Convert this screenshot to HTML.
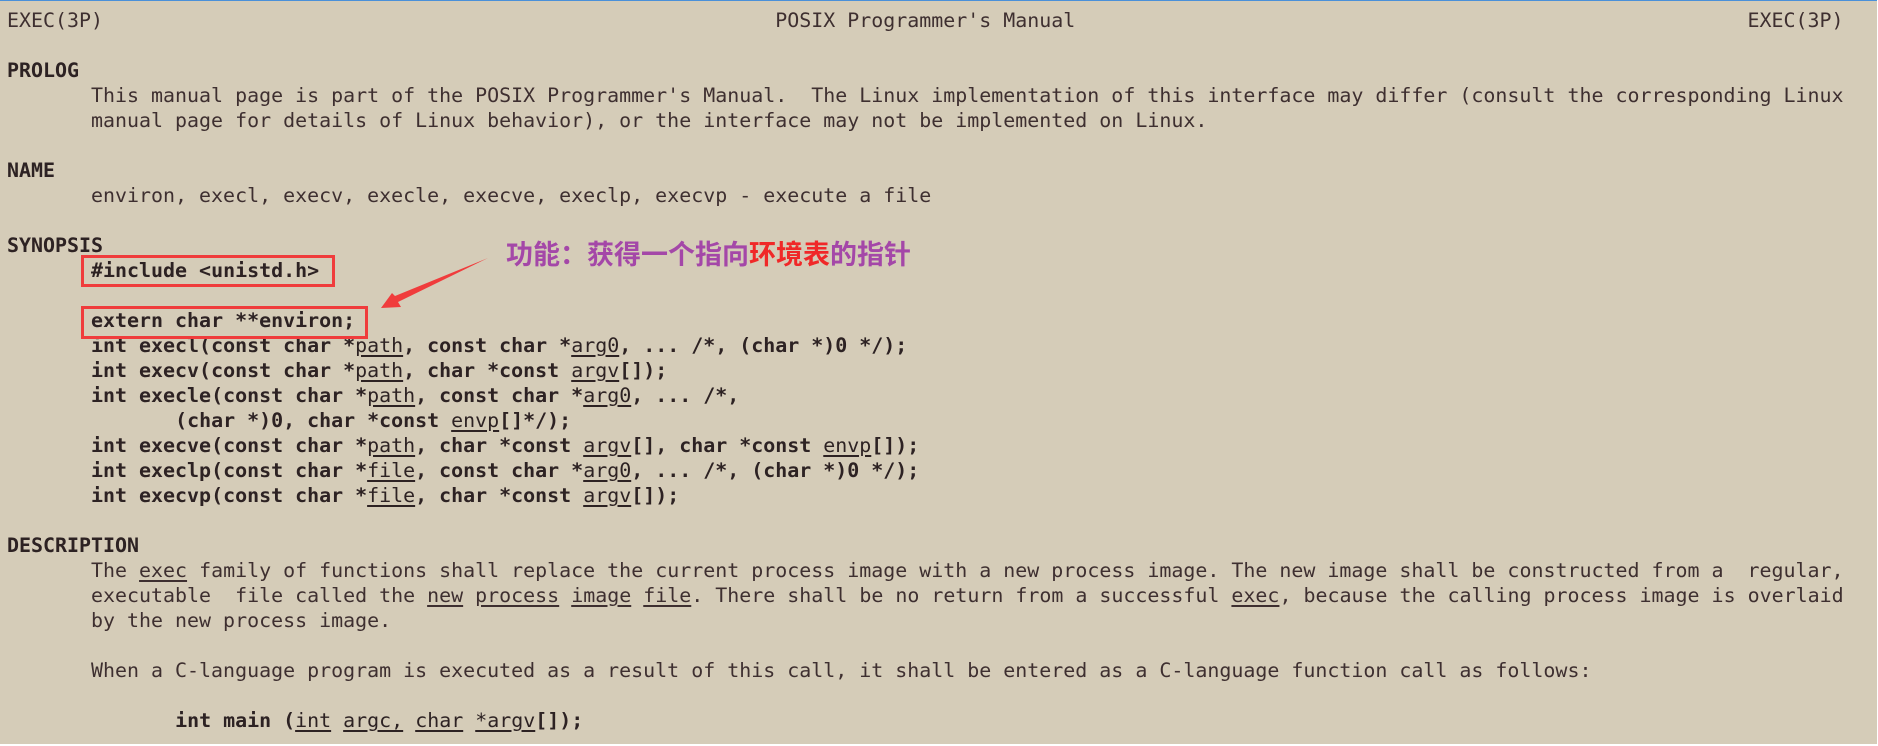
<!DOCTYPE html>
<html><head><meta charset="utf-8"><style>
html,body{margin:0;padding:0;}
body{width:1878px;height:746px;background:#fff;position:relative;overflow:hidden;}
#bg{position:absolute;left:0;top:0;width:1877px;height:744px;background:#d5ccb8;border-top:1px solid #4a90d9;box-sizing:border-box;}
pre{position:absolute;left:7px;top:8px;margin:0;font-family:"DejaVu Sans Mono","Liberation Mono",monospace;font-size:19.95px;line-height:25px;color:#3e2f30;}
b{color:#2d2223;}
u{text-decoration:underline;text-underline-offset:3px;text-decoration-thickness:1.5px;font-weight:normal;}
.box{position:absolute;border:3px solid #f03c3c;box-sizing:border-box;}
.note{position:absolute;left:506px;top:238px;font-family:"Liberation Sans","Noto Sans CJK SC",sans-serif;font-weight:bold;font-size:27px;line-height:34px;color:#a447a8;white-space:nowrap;}
.note span{color:#f02828;}
</style></head><body>
<div id="bg"></div>
<pre>EXEC(3P)                                                        POSIX Programmer's Manual                                                        EXEC(3P)

<b>PROLOG</b>
       This manual page is part of the POSIX Programmer's Manual.  The Linux implementation of this interface may differ (consult the corresponding Linux
       manual page for details of Linux behavior), or the interface may not be implemented on Linux.

<b>NAME</b>
       environ, execl, execv, execle, execve, execlp, execvp - execute a file

<b>SYNOPSIS</b>
       <b>#include &lt;unistd.h&gt;</b>

       <b>extern char **environ;</b>
       <b>int execl(const char *<u>path</u>, const char *<u>arg0</u>, ... /*, (char *)0 */);</b>
       <b>int execv(const char *<u>path</u>, char *const <u>argv</u>[]);</b>
       <b>int execle(const char *<u>path</u>, const char *<u>arg0</u>, ... /*,</b>
              <b>(char *)0, char *const <u>envp</u>[]*/);</b>
       <b>int execve(const char *<u>path</u>, char *const <u>argv</u>[], char *const <u>envp</u>[]);</b>
       <b>int execlp(const char *<u>file</u>, const char *<u>arg0</u>, ... /*, (char *)0 */);</b>
       <b>int execvp(const char *<u>file</u>, char *const <u>argv</u>[]);</b>

<b>DESCRIPTION</b>
       The <u>exec</u> family of functions shall replace the current process image with a new process image. The new image shall be constructed from a  regular,
       executable  file called the <u>new</u> <u>process</u> <u>image</u> <u>file</u>. There shall be no return from a successful <u>exec</u>, because the calling process image is overlaid
       by the new process image.

       When a C-language program is executed as a result of this call, it shall be entered as a C-language function call as follows:

              <b>int main (<u>int</u> <u>argc,</u> <u>char</u> <u>*argv</u>[]);</b></pre>
<div class="box" style="left:81px;top:255px;width:254px;height:32px;"></div>
<div class="box" style="left:81px;top:306px;width:287px;height:33px;"></div>
<svg style="position:absolute;left:0;top:0" width="1878" height="746">
<polygon points="488,258 395,296 392,293 381,308 401,307 398,302" fill="#f03c3c"/>
</svg>
<div class="note">功能：获得一个指向<span>环境表</span>的指针</div>
</body></html>
